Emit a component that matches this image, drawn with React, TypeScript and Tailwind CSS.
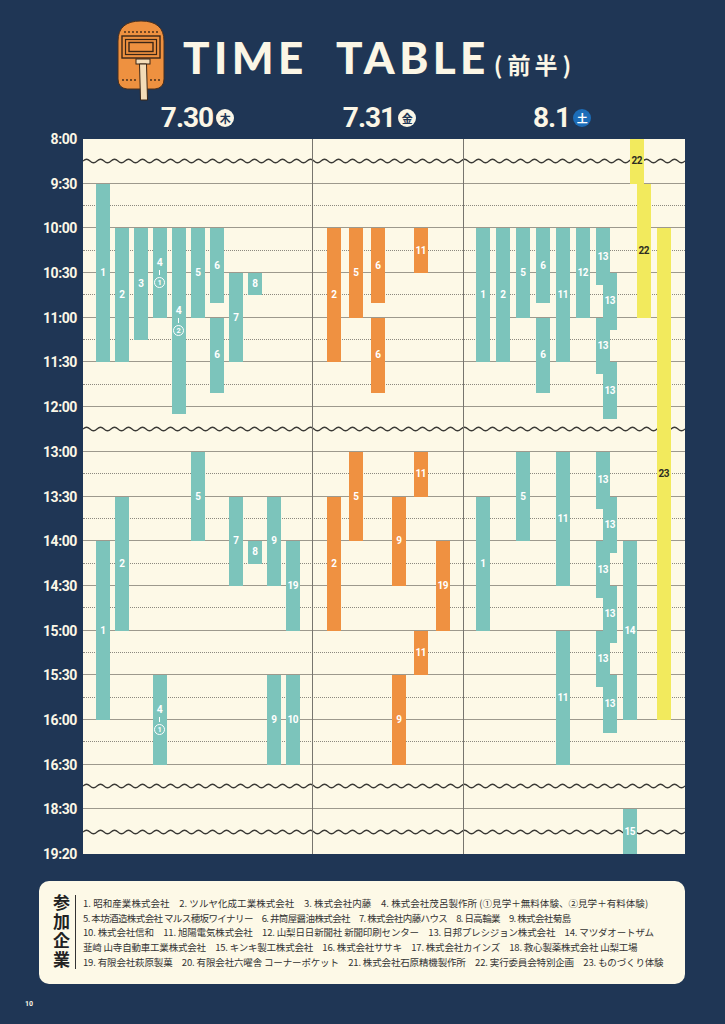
import React from "react";

type Bar = { x: number; a: number; b: number; n?: string };

const H = 715 / 16;
const NAVY = "#1f3655";

const TIMES = ["8:00", "9:30", "10:00", "10:30", "11:00", "11:30", "12:00", "13:00", "13:30", "14:00", "14:30", "15:00", "15:30", "16:00", "16:30", "18:30", "19:20"];
const WAVE_ROWS = [0, 6, 14, 15];

// row index: 8:00=0, 9:30=1, 10:00=2 ... 12:00=6, 13:00=7 ... 16:30=14, 18:30=15, 19:20=16
const day1: Bar[] = [
  { x: 13, a: 1, b: 5, n: "1" },
  { x: 32, a: 2, b: 5, n: "2" },
  { x: 51, a: 2, b: 4.5, n: "3" },
  { x: 70, a: 2, b: 4, n: "4-1" },
  { x: 89, a: 2, b: 6.15, n: "4-2" },
  { x: 108, a: 2, b: 4, n: "5" },
  { x: 127, a: 2, b: 3.68, n: "6" },
  { x: 127, a: 4, b: 5.68, n: "6" },
  { x: 146, a: 3, b: 5, n: "7" },
  { x: 165, a: 3, b: 3.5, n: "8" },
  { x: 108, a: 7, b: 9, n: "5" },
  { x: 32, a: 8, b: 11, n: "2" },
  { x: 146, a: 8, b: 10, n: "7" },
  { x: 184, a: 8, b: 10, n: "9" },
  { x: 13, a: 9, b: 13, n: "1" },
  { x: 165, a: 9, b: 9.5, n: "8" },
  { x: 203, a: 9, b: 11, n: "19" },
  { x: 70, a: 12, b: 14, n: "4-1" },
  { x: 184, a: 12, b: 14, n: "9" },
  { x: 203, a: 12, b: 14, n: "10" },
];

const day2: Bar[] = [
  { x: 14, a: 2, b: 5, n: "2" },
  { x: 36, a: 2, b: 4, n: "5" },
  { x: 58, a: 2, b: 3.68, n: "6" },
  { x: 58, a: 4, b: 5.68, n: "6" },
  { x: 101, a: 2, b: 3, n: "11" },
  { x: 36, a: 7, b: 9, n: "5" },
  { x: 101, a: 7, b: 8, n: "11" },
  { x: 14, a: 8, b: 11, n: "2" },
  { x: 79, a: 8, b: 10, n: "9" },
  { x: 123, a: 9, b: 11, n: "19" },
  { x: 101, a: 11, b: 12, n: "11" },
  { x: 79, a: 12, b: 14, n: "9" },
];

const day3: Bar[] = [
  { x: 12, a: 2, b: 5, n: "1" },
  { x: 32, a: 2, b: 5, n: "2" },
  { x: 52, a: 2, b: 4, n: "5" },
  { x: 72, a: 2, b: 3.68, n: "6" },
  { x: 72, a: 4, b: 5.68, n: "6" },
  { x: 92, a: 2, b: 5, n: "11" },
  { x: 112, a: 2, b: 4, n: "12" },
  { x: 132, a: 2, b: 3.27, n: "13" },
  { x: 139, a: 3, b: 4.27, n: "13" },
  { x: 132, a: 4, b: 5.26, n: "13" },
  { x: 139, a: 5, b: 6.26, n: "13" },
  { x: 52, a: 7, b: 9, n: "5" },
  { x: 92, a: 7, b: 10, n: "11" },
  { x: 92, a: 11, b: 14, n: "11" },
  { x: 12, a: 8, b: 11, n: "1" },
  { x: 132, a: 7, b: 8.27, n: "13" },
  { x: 139, a: 8, b: 9.27, n: "13" },
  { x: 132, a: 9, b: 10.27, n: "13" },
  { x: 139, a: 10, b: 11.27, n: "13" },
  { x: 132, a: 11, b: 12.27, n: "13" },
  { x: 139, a: 12, b: 13.29, n: "13" },
  { x: 159, a: 9, b: 13, n: "14" },
  { x: 159, a: 15, b: 16, n: "15" },
];

const day3Yellow: Bar[] = [
  { x: 166, a: 0, b: 1, n: "22" },
  { x: 173, a: 1, b: 4, n: "22" },
  { x: 193, a: 2, b: 13, n: "23" },
];

const LEGEND = [
  { t: "1. 昭和産業株式会社　2. ツルヤ化成工業株式会社　3. 株式会社内藤　4. 株式会社茂呂製作所 (①見学＋無料体験、②見学＋有料体験)", c: "tracking-[0.05px]" },
  { t: "5. 本坊酒造株式会社 マルス穂坂ワイナリー　6. 井筒屋醤油株式会社　7. 株式会社内藤ハウス　8. 日高輪業　9. 株式会社菊島", c: "tracking-[-0.6px]" },
  { t: "10. 株式会社信和　11. 旭陽電気株式会社　12. 山梨日日新聞社 新聞印刷センター　13. 日邦プレシジョン株式会社　14. マツダオートザム", c: "tracking-[-0.15px]" },
  { t: "韮崎 山寺自動車工業株式会社　15. キンキ製工株式会社　16. 株式会社ササキ　17. 株式会社カインズ　18. 救心製薬株式会社 山梨工場", c: "tracking-[-0.2px]" },
  { t: "19. 有限会社萩原製菓　20. 有限会社六曜舎 コーナーポケット　21. 株式会社石原精機製作所　22. 実行委員会特別企画　23. ものづくり体験", c: "tracking-[-0.15px]" },
];

let WAVE = "M0 4";
for (let x = 0; x < 602; x += 14) WAVE += ` Q${x + 3.5} 0.5 ${x + 7} 4 Q${x + 10.5} 7.5 ${x + 14} 4`;

function ShieldIcon() {
  const dots = [10, 14, 18, 22, 26, 30, 34, 38, 42];
  return (
    <svg width="54" height="82" viewBox="0 0 52 82" className="shrink-0">
      <path d="M3 22 Q3 2 26 2 Q49 2 49 22 L49 60 Q49 69 40 70 L12 70 Q3 69 3 60 Z" fill="#ee9140" stroke="#4a2f1c" strokeWidth="1" />
      {dots.map((d) => (
        <circle key={`t${d}`} cx={d} cy="13" r="0.9" fill="#3b2616" />
      ))}
      {[8, 12, 16, 20, 36, 40, 44].map((d) => (
        <circle key={`b${d}`} cx={d} cy="61" r="0.9" fill="#3b2616" />
      ))}
      <rect x="7" y="17" width="38" height="22" fill="#ee9140" stroke="#3b2616" strokeWidth="1.4" />
      <rect x="10.5" y="20.5" width="31" height="15" fill="none" stroke="#3b2616" strokeWidth="1.2" />
      <rect x="14" y="23.5" width="24" height="9" fill="#ee9140" stroke="#3b2616" strokeWidth="1.4" />
      <rect x="21" y="40" width="14" height="5" fill="#f3dcb8" stroke="#3b2616" strokeWidth="1" />
      <path d="M24.5 45 L31.5 45 L32.5 81 L25.5 81 Z" fill="#f3dcb8" stroke="#3b2616" strokeWidth="1" />
    </svg>
  );
}

function BarLabel({ n, dark }: { n?: string; dark?: boolean }) {
  if (!n) return null;
  if (n === "4-1" || n === "4-2") {
    return (
      <div className="flex flex-col items-center leading-none text-white">
        <span className="text-[10.5px] font-bold">4</span>
        <span className="my-[2px] h-[5px] w-px bg-white" />
        <span className="flex h-[11px] w-[11px] items-center justify-center rounded-full border border-white text-[7.5px] font-bold">
          {n === "4-1" ? "1" : "2"}
        </span>
      </div>
    );
  }
  return (
    <span className={`text-[10px] font-bold leading-none tracking-[-0.5px] ${dark ? "text-[#2e2e22]" : "text-white"}`}>
      {n}
    </span>
  );
}

function Bars({ bars, color, dark }: { bars: Bar[]; color: string; dark?: boolean }) {
  return (
    <>
      {bars.map((b, i) => (
        <div
          key={i}
          className={`absolute flex w-[13.5px] items-center justify-center ${color}`}
          style={{ left: b.x, top: b.a * H, height: (b.b - b.a) * H }}
        >
          <BarLabel n={b.n} dark={dark} />
        </div>
      ))}
    </>
  );
}

function DayHead({ date, dow, blue, className }: { date: string; dow: string; blue?: boolean; className: string }) {
  return (
    <div className={`flex items-start justify-center pt-[4px] ${className}`}>
      <div className="flex items-center">
        <span className="text-[28px] font-bold leading-none tracking-[-1px] text-[#fbf6e6]">{date}</span>
        <span
          className={`ml-[3px] flex h-[18px] w-[18px] items-center justify-center rounded-full text-[11px] font-bold leading-none ${
            blue ? "bg-[#1c6db8] text-white" : "bg-[#fbf6e6] text-[#1f3655]"
          }`}
          style={{ fontFamily: "'Noto Sans CJK JP', sans-serif" }}
        >
          {dow}
        </span>
      </div>
    </div>
  );
}

export default function App() {
  return (
    <div
      className="relative h-[1024px] w-[725px] overflow-hidden"
      style={{ backgroundColor: NAVY, fontFamily: "Roboto, 'Noto Sans CJK JP', sans-serif" }}
    >
      {/* Title */}
      <div className="flex h-[100px] pl-[114px] pt-[19px]">
        <ShieldIcon />
        <div className="ml-[15px] mt-[16px] flex items-baseline">
          <span className="text-[44px] font-black leading-none tracking-[0.1em] text-[#fbf6e6]" style={{ fontFamily: "Lato, sans-serif" }}>
            TIME&nbsp;&nbsp;TABLE
          </span>
          <span
            className="ml-[4px] flex items-baseline text-[23px] font-bold leading-none text-[#fbf6e6]"
            style={{ fontFamily: "'Noto Sans CJK JP', sans-serif" }}
          >
            <span className="mr-[5px]">(</span>
            <span className="tracking-[4px]">前半</span>
            <span className="ml-[1px]">)</span>
          </span>
        </div>
      </div>

      {/* Dates */}
      <div className="flex h-[39px] pl-[83px]">
        <DayHead date="7.30" dow="木" className="w-[229px]" />
        <DayHead date="7.31" dow="金" className="w-[151px] pr-[16px]" />
        <DayHead date="8.1" dow="土" blue className="w-[222px] pr-[24px]" />
      </div>

      {/* Grid */}
      <div className="flex h-[715px]">
        <div className="w-[83px] pr-[6px]">
          {TIMES.map((t, i) => (
            <div key={t} className={i < 16 ? "h-[44.6875px]" : "h-0"}>
              <span className="block -translate-y-1/2 text-right text-[14px] font-bold leading-none tracking-[-0.4px] text-[#fbf6e6]">
                {t}
              </span>
            </div>
          ))}
        </div>

        <div className="relative w-[602px] bg-[#fdf9e7]">
          {Array.from({ length: 16 }).map((_, i) => (
            <div
              key={i}
              className={`flex h-[44.6875px] flex-col justify-center ${i < 15 ? "border-b border-[#9d998d]" : ""}`}
            >
              {WAVE_ROWS.includes(i) ? (
                <svg width="602" height="8" className="block">
                  <path d={WAVE} fill="none" stroke="#3a3935" strokeWidth="1.2" />
                </svg>
              ) : (
                <div className="border-t border-dotted border-[#8c897f]" />
              )}
            </div>
          ))}

          <div className="absolute inset-0 flex">
            <div className="relative w-[229px]">
              <Bars bars={day1} color="bg-[#7cc4bb]" />
            </div>
            <div className="relative w-[151px] border-l border-[#77756e]">
              <Bars bars={day2} color="bg-[#ef9141]" />
            </div>
            <div className="relative flex-1 border-l border-[#77756e]">
              <Bars bars={day3} color="bg-[#7cc4bb]" />
              <Bars bars={day3Yellow} color="bg-[#f2ea5d]" dark />
            </div>
          </div>
        </div>
      </div>

      {/* Legend */}
      <div
        className="ml-[39px] mt-[27px] flex h-[103px] w-[646px] rounded-[10px] bg-[#fdf9e7] pl-[13px] pt-[13px]"
        style={{ fontFamily: "'Noto Sans CJK JP', sans-serif" }}
      >
        <div className="w-[18px] text-[17px] font-bold leading-[18px] tracking-[2px] text-[#222] [writing-mode:vertical-rl]">
          参加企業
        </div>
        <div className="ml-[5px] mt-[1px] h-[74px] w-px bg-[#333]" />
        <div className="ml-[7px] mt-[2px] flex flex-col">
          {LEGEND.map((l) => (
            <p key={l.t} className={`whitespace-nowrap text-[9.5px] leading-[14.7px] text-[#333] ${l.c}`}>
              {l.t}
            </p>
          ))}
        </div>
      </div>

      <div className="ml-[25px] mt-[15px] text-[7px] font-bold text-[#fbf6e6]">10</div>
    </div>
  );
}
